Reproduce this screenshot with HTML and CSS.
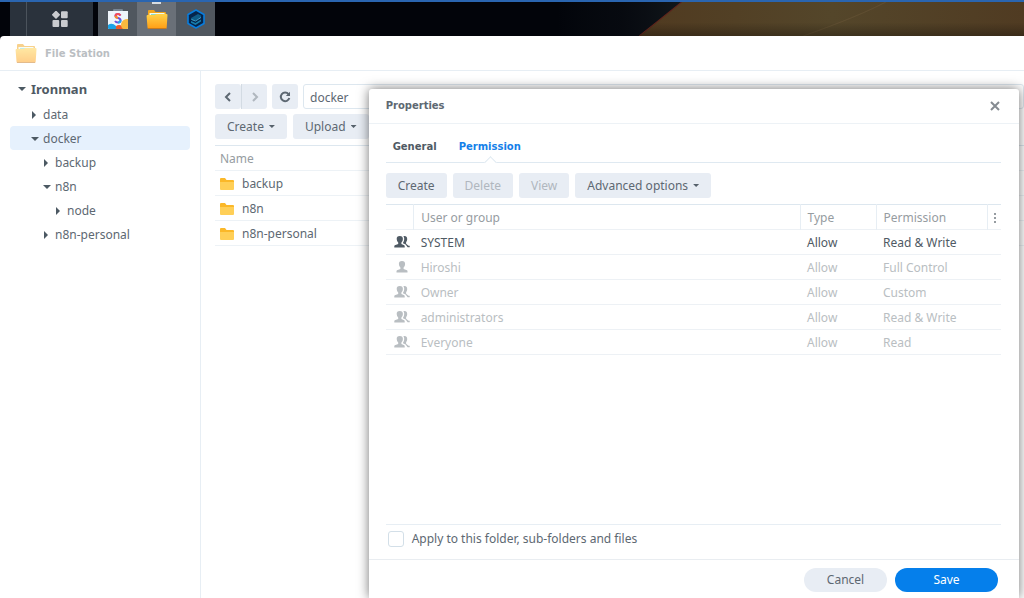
FILE: index.html
```html
<!DOCTYPE html>
<html lang="en">
<head>
<meta charset="utf-8">
<title>File Station</title>
<link rel="stylesheet" href="styles.css">
</head>
<body>
<svg class="defs" aria-hidden="true">
  <defs>
    <linearGradient id="gold" x1="0" y1="0" x2="0" y2="1"><stop offset="0" stop-color="#ffd249"/><stop offset="1" stop-color="#ff9d14"/></linearGradient>
    <symbol id="big-folder" viewBox="0 0 22 22">
      <path d="M2 20V3q0-1 1-1h5l1.500 2H19q1 0 1 1v15z" fill="#f3a51c"/>
      <path d="M3.500 5h15v5h-15z" fill="#eefcf4"/><path d="M5 6.500h13" stroke="#8ed9c4"/>
      <path d="M.6 8q0-1 1-1H8q1 0 1.500-.6L10 6h10.500q1 0 1 1l-.8 12.500q0 1.500-1.500 1.500H3q-1.500 0-1.500-1.500z" fill="url(#gold)"/>
      <path d="M2 20.500h18" stroke="#c97a1b"/>
    </symbol>
    <symbol id="folder" viewBox="0 0 14 12"><path d="M0 11V1q0-1 1-1h4l1.500 2H13q1 0 1 1v8z" fill="#fbb829"/><path d="M0 4h14v7q0 1-1 1H1q-1 0-1-1z" fill="#ffcf57"/></symbol>
    <symbol id="user" viewBox="0 0 16 12"><path d="M8 0C5.800 0 4.800 1.200 4.900 3q0 2 1.500 3.600V8L3 9.200q-.5.300-.5 1.100v1.200h11v-1.200q0-.8-.5-1.100L9.600 8V6.600Q11.100 5 11.100 3c0-1.800-.9-3-3.100-3z"/></symbol>
    <symbol id="group" viewBox="0 0 16 12"><path d="M5.800 0C3.500 0 2.600 1.200 2.700 3q0 2 1.500 3.600V8L.8 9.200q-.5.300-.5 1.100v1.200h10.400v-1.200q0-.8-.5-1.100L7.400 8V6.600Q8.900 5 8.900 3c0-1.800-.9-3-3.100-3z"/><path d="M9.300.3Q10.300 1.400 10.200 3q0 2-1.200 3.800V7.300l2.600 1.100 2 2.900h2.100V9.700h-1.200L12.100 7.700V6.200q1.200-1.500 1.100-3.300Q12.900-.6 9.300.3z"/></symbol>
  </defs>
</svg>

<div class="desktop">
  <nav class="taskbar" aria-label="Taskbar">
    <div class="launcher">
      <button class="task menu" aria-label="Main menu"><svg width="16" height="16" viewBox="0 0 16 16" fill="#c9cbcf"><path d="M4 .6l3.200 3.200L4 7 .8 3.800z" stroke="#c9cbcf" stroke-width="1.600" stroke-linejoin="round"/><rect x="9" y=".3" width="6.700" height="7" rx="1"/><rect x=".5" y="9" width="6.700" height="7" rx="1"/><rect x="9" y="9" width="6.700" height="7" rx="1"/></svg></button>
    </div>
    <div class="apps">
      <button class="task" aria-label="Package Center"><svg width="20" height="21" viewBox="0 0 20 21"><path d="M6 3V1h8v2" fill="none" stroke="#8696a6" stroke-width="1.500"/><path d="M0 2h20v17q0 1-1 1H1q-1 0-1-1z" fill="#eff5fb"/><path d="M0 16q4-3 8 1l2 3H1q-1 0-1-1z" fill="#1ba4e8"/><path d="M8 20q-1-4 3-4 4 0 5 4z" fill="#ef5b2b"/><path d="M20 10q-6 0-7 5 0 5 3 5h3q1 0 1-1z" fill="#f8b93f"/><path d="M12.500 6.500Q11.500 5 10 5 7.500 5 7.500 7q0 1.500 2.500 2t2.500 2.200Q12.500 13.500 10 13.500 8 13.500 7 12" fill="none" stroke="#6b50dd" stroke-width="2"/><path d="M12.500 6.500Q11.500 5 10 5 7.500 5 7.500 7" fill="none" stroke="#f84b55" stroke-width="2"/><path d="M7.500 7q0 1.500 2.500 2" fill="none" stroke="#ff8d1c" stroke-width="2"/><path d="M12.500 11.200Q12.500 13.500 10 13.500" fill="none" stroke="#1fa8ec" stroke-width="2"/></svg></button>
      <button class="task active" aria-label="File Station"><svg width="22" height="22"><use href="#big-folder"/></svg></button>
      <button class="task" aria-label="Container Manager"><svg width="18" height="20" viewBox="0 0 18 20"><path d="M9 1l8 4.500v9L9 19l-8-4.500v-9z" fill="#05244b" stroke="#087dde" stroke-width="1.600" stroke-linejoin="round"/><path d="M4 9l7-4 3 1.500v2L8 12l-4-1.500z" fill="#0e5b87"/><path d="M4 12l4.500 2L14 10.500v2L8.500 16 4 13.800z" fill="#167dab"/><path d="M4.500 10.500l4 1.500L14 8.500" fill="none" stroke="#4fb4da" stroke-width=".8"/></svg></button>
    </div>
    <svg class="scenery" viewBox="0 0 464 34" preserveAspectRatio="none" aria-hidden="true">
      <defs><linearGradient id="sand"><stop stop-color="#503a20"/><stop offset=".5" stop-color="#54462a"/><stop offset="1" stop-color="#503b22"/></linearGradient><linearGradient id="night"><stop stop-color="#0d1217" stop-opacity="0"/><stop offset=".5" stop-color="#0a0d13" stop-opacity=".6"/><stop offset="1" stop-color="#11171b"/></linearGradient><linearGradient id="fade" x1="0" y1="0" x2="0" y2="1"><stop offset=".6" stop-opacity="0"/><stop offset="1" stop-opacity=".28"/></linearGradient></defs>
      <path d="M0 0h123L81 34H0z" fill="url(#night)"/><path d="M123 0h341v34H81z" fill="url(#sand)"/><path d="M123 0L81 34" stroke="#60251c"/><path d="M326 0q-26 14-82 34" fill="none" stroke="#6b5839" opacity=".5"/><path d="M123 0h341v34H81z" fill="url(#fade)"/>
    </svg>
  </nav>

  <section class="station">
    <header class="station-title"><svg width="22" height="22"><use href="#big-folder"/></svg><h1>File Station</h1></header>
    <div class="station-body">
      <aside>
        <ul class="tree">
          <li class="level-0 open root">Ironman</li>
          <li class="level-1">data</li>
          <li class="level-1 open selected">docker</li>
          <li class="level-2">backup</li>
          <li class="level-2 open">n8n</li>
          <li class="level-3">node</li>
          <li class="level-2">n8n-personal</li>
        </ul>
      </aside>
      <main>
        <div class="path-row">
          <div class="history">
            <button class="btn" aria-label="Back"><svg width="8" height="10" viewBox="0 0 8 10"><path d="M6 1L2 5l4 4"/></svg></button>
            <button class="btn" aria-label="Forward" disabled><svg width="8" height="10" viewBox="0 0 8 10"><path d="M2 1l4 4-4 4"/></svg></button>
          </div>
          <button class="btn icon" aria-label="Refresh"><svg width="12" height="12" viewBox="0 0 12 12"><path d="M9.500 3.200A4.300 4.300 0 1 0 10.300 7"/><path d="M11 .8V5H6.800z" class="solid"/></svg></button>
          <input class="path" type="text" value="docker" aria-label="Path">
        </div>
        <div class="tools"><button class="btn drop">Create</button><button class="btn drop">Upload</button></div>
        <table class="files">
          <thead><tr><th>Name</th></tr></thead>
          <tbody>
            <tr><td><svg width="14" height="12"><use href="#folder"/></svg>backup</td></tr>
            <tr><td><svg width="14" height="12"><use href="#folder"/></svg>n8n</td></tr>
            <tr><td><svg width="14" height="12"><use href="#folder"/></svg>n8n-personal</td></tr>
          </tbody>
        </table>
      </main>
    </div>
  </section>

  <section class="dialog" role="dialog" aria-labelledby="dialog-title">
    <header class="dialog-title"><h2 id="dialog-title">Properties</h2><button class="close" aria-label="Close"><svg width="10" height="10" viewBox="0 0 10 10"><path d="M1 1l8 8M9 1L1 9"/></svg></button></header>
    <div class="dialog-body">
      <div class="tabs" role="tablist"><button role="tab" aria-selected="false">General</button><button role="tab" aria-selected="true">Permission</button></div>
      <div class="tools"><button class="btn">Create</button><button class="btn" disabled>Delete</button><button class="btn" disabled>View</button><button class="btn drop">Advanced options</button></div>
      <table class="permissions">
        <colgroup><col class="c-icon"><col><col class="c-type"><col class="c-perm"><col class="c-more"></colgroup>
        <thead><tr><th></th><th>User or group</th><th>Type</th><th>Permission</th><th><button class="more" aria-label="Columns"><svg width="3" height="10" viewBox="0 0 3 10"><path d="M0 0h2v2H0zM0 4h2v2H0zM0 8h2v2H0z"/></svg></button></th></tr></thead>
        <tbody>
          <tr class="own"><td><svg width="16" height="12"><use href="#group"/></svg></td><td>SYSTEM</td><td>Allow</td><td colspan="2">Read &amp; Write</td></tr>
          <tr><td><svg width="16" height="12"><use href="#user"/></svg></td><td>Hiroshi</td><td>Allow</td><td colspan="2">Full Control</td></tr>
          <tr><td><svg width="16" height="12"><use href="#group"/></svg></td><td>Owner</td><td>Allow</td><td colspan="2">Custom</td></tr>
          <tr><td><svg width="16" height="12"><use href="#group"/></svg></td><td>administrators</td><td>Allow</td><td colspan="2">Read &amp; Write</td></tr>
          <tr><td><svg width="16" height="12"><use href="#group"/></svg></td><td>Everyone</td><td>Allow</td><td colspan="2">Read</td></tr>
        </tbody>
      </table>
      <div class="apply"><input type="checkbox" id="apply"><label for="apply">Apply to this folder, sub-folders and files</label></div>
    </div>
    <footer><button class="pill">Cancel</button><button class="pill primary">Save</button></footer>
  </section>
</div>
</body>
</html>
```
FILE: styles.css
```css
* { box-sizing: border-box; }
body {
  margin: 0;
  color: #5d6872;
  font: 12px/16px "Noto Sans", "Open Sans", sans-serif;
}
button, input { font: inherit; color: inherit; }
button { border: 0; padding: 0; background: none; }
h1, h2 { margin: 0; font-size: 10px; font-weight: 700; font-family: "DejaVu Sans", sans-serif; }
table { width: 100%; border-collapse: collapse; table-layout: fixed; }
th { color: #969ca1; font-weight: 400; text-align: left; }
.defs { position: absolute; width: 0; height: 0; }

.desktop {
  position: relative;
  display: flex;
  flex-direction: column;
  min-height: 100vh;
  overflow: hidden;
  background: #02040a;
}

/* Taskbar */
.taskbar {
  display: flex;
  flex: none;
  height: 36px;
  padding-left: 10px;
  border-top: 2px solid #2a65b0;
}
.launcher { display: flex; width: 83px; margin-right: 5px; padding-left: 16px; background: #2a323c; }
.launcher .menu { flex: 1; border-left: 1px solid #4b535c; }
.apps { display: flex; background: #50575f; }
.task { display: flex; align-items: center; justify-content: center; width: 39px; }
.task.active { position: relative; background: #6a7078; }
.task.active::before {
  position: absolute;
  top: 0;
  left: 15px;
  width: 9px;
  height: 2px;
  background: #d8dce0;
  content: "";
}
.scenery { width: 46%; height: 34px; margin-left: auto; }

/* File Station window */
.station { display: flex; flex: 1; flex-direction: column; border-radius: 4px 0 0 0; background: #fff; }
.station-title {
  display: flex;
  align-items: center;
  gap: 8px;
  height: 35px;
  padding-left: 15px;
  border-bottom: 1px solid #e7eef4;
  color: #babec2;
}
.station-title h1 { padding-top: 2px; }
.station-title svg { opacity: .5; }
.station-body { display: flex; flex: 1; }
aside { width: 201px; padding: 7px 10px; border-right: 1px solid #e7eef4; }
.tree { margin: 0; padding: 0; list-style: none; }
.tree li { display: flex; align-items: center; gap: 6px; height: 24px; padding-top: 2px; border-radius: 4px; }
.tree li::before {
  width: 6px;
  height: 8px;
  background: #4c5963;
  clip-path: polygon(17% 0, 83% 50%, 17% 100%);
  content: "";
}
.tree .open::before { width: 8px; height: 4px; margin-right: -2px; clip-path: polygon(0 0, 100% 0, 50% 100%); }
.tree .root { padding-top: 0; padding-bottom: 2px; color: #4f5a64; font-size: 13px; font-weight: 700; }
.tree .root::before { margin-right: -1px; }
.tree .level-0 { padding-left: 8px; }
.tree .level-1 { padding-left: 21px; }
.tree .level-2 { padding-left: 33px; }
.tree .level-3 { padding-left: 45px; }
.tree .selected { background: #e6f1fd; }

main { flex: 1; padding: 13px 0 0 14px; }
.path-row { display: flex; gap: 5px; margin-bottom: 5px; }
.history { display: flex; }
.history .btn { width: 26px; padding: 0; }
.history .btn + .btn { border-left: 1px solid #d3dbe3; border-radius: 0 3px 3px 0; }
.btn {
  display: inline-flex;
  align-items: center;
  justify-content: center;
  height: 25px;
  padding: 0 12px;
  border-radius: 3px;
  background: #e8edf4;
}
.btn:disabled { color: #b0b7be; }
.btn svg { fill: none; stroke: currentColor; stroke-width: 2; }
.btn svg .solid { fill: currentColor; stroke: none; }
.btn.icon { width: 26px; padding: 0; }
.drop::after {
  width: 6px;
  height: 3px;
  margin-left: 5px;
  background: #56616b;
  clip-path: polygon(0 0, 100% 0, 50% 100%);
  content: "";
}
.path { flex: 1; min-width: 0; height: 25px; padding: 2px 6px 0; border: 1px solid #dde7ef; border-radius: 3px; }
.tools { display: flex; gap: 6px; }
.files { margin-top: 6px; border-top: 1px solid #dde7ef; }
.files tr { height: 25px; border-bottom: 1px solid #edf2f6; }
.files th, .files td { padding: 2px 5px 0; }
.files svg { margin-right: 8px; vertical-align: -2px; }

/* Properties window */
.dialog {
  position: absolute;
  top: 89px;
  right: 5px;
  bottom: 0;
  left: 36%;
  display: flex;
  flex-direction: column;
  border-radius: 3px 3px 0 0;
  background: #fff;
  box-shadow: 0 0 12px rgba(0, 0, 0, .55);
}
.dialog-title {
  display: flex;
  align-items: center;
  justify-content: space-between;
  height: 35px;
  padding: 0 19px 0 17px;
  border-bottom: 1px solid #edf2f6;
}
.close { display: flex; }
.close svg { fill: none; stroke: #858b91; stroke-width: 2; }
.dialog-body { display: flex; flex: 1; flex-direction: column; padding: 0 18px 0 17px; }
.tabs {
  display: flex;
  gap: 22px;
  height: 39px;
  margin-bottom: 10px;
  padding: 0 7px;
  border-bottom: 1px solid #dfe9f1;
}
.tabs button { position: relative; padding-top: 7px; color: #4f5a64; font: 700 10px/16px "DejaVu Sans", sans-serif; }
.tabs [aria-selected="true"] { color: #147fe9; }
.tabs [aria-selected="true"]::after {
  position: absolute;
  bottom: -5px;
  left: 50%;
  width: 8px;
  height: 8px;
  margin-left: -4px;
  border: solid #dfe9f1;
  border-width: 1px 0 0 1px;
  background: #fff;
  transform: rotate(45deg);
  content: "";
}
.permissions { margin-top: 6px; border-top: 1px solid #dde7ef; color: #b9bec2; }
.permissions tr { height: 25px; border-bottom: 1px solid #edf1f5; }
.permissions th, .permissions td { padding: 2px 0 0 7px; }
.permissions td:first-child { padding: 0 0 0 8px; }
.permissions th + th { border-left: 1px solid #e7eef4; }
.permissions .own { color: #4f5a64; }
.permissions svg { display: block; fill: currentColor; }
.permissions .more { display: block; margin-left: -1px; color: #969ca1; }
.c-icon { width: 28px; }
.c-type { width: 76px; }
.c-perm { width: 111px; }
.c-more { width: 14px; }
.apply {
  display: flex;
  align-items: center;
  gap: 8px;
  height: 35px;
  margin-top: auto;
  padding: 0 2px 6px;
  border-top: 1px solid #e7eef4;
}
.apply input {
  width: 16px;
  height: 16px;
  margin: 0;
  border: 1px solid #d3dfe8;
  border-radius: 3px;
  background: #fff;
  appearance: none;
}
footer {
  display: flex;
  justify-content: flex-end;
  gap: 8px;
  padding: 8px 21px 6px;
  border-top: 1px solid #e9edf1;
}
.pill { min-width: 83px; height: 24px; border-radius: 12px; background: #e8edf4; }
.pill.primary { min-width: 103px; color: #fff; background: #057feb; }
```
